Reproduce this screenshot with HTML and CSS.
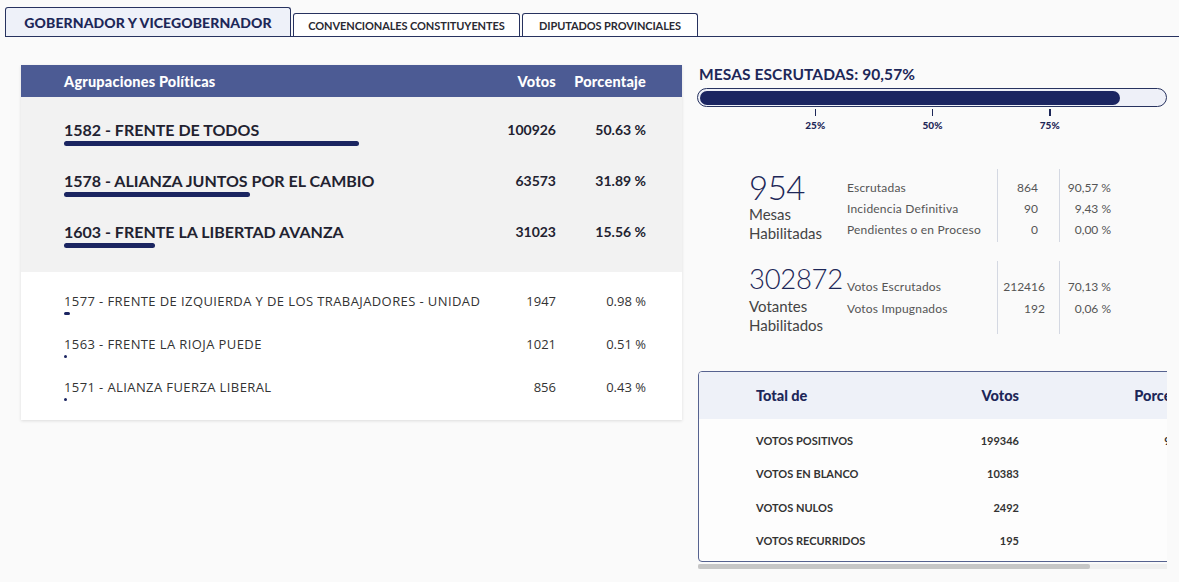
FILE: index.html
```html
<!DOCTYPE html>
<html lang="es">
<head>
<meta charset="utf-8">
<title>Resultados</title>
<link rel="stylesheet" href="styles.css">
</head>
<body>
<nav class="tabs">
  <div class="tab tab-active tab-w1">GOBERNADOR Y VICEGOBERNADOR</div>
  <div class="tab tab-w2">CONVENCIONALES CONSTITUYENTES</div>
  <div class="tab tab-w3">DIPUTADOS PROVINCIALES</div>
</nav>
<main class="layout">
  <section class="results">
    <div class="results-head grid-row">
      <span>Agrupaciones Políticas</span><span class="num">Votos</span><span class="num">Porcentaje</span>
    </div>
    <div class="top-group">
      <div class="party-main">
        <div class="grid-row"><span class="name">1582 - FRENTE DE TODOS</span><span class="num">100926</span><span class="num">50.63 %</span></div>
        <div class="bar" style="width:50.63%"></div>
      </div>
      <div class="party-main">
        <div class="grid-row"><span class="name">1578 - ALIANZA JUNTOS POR EL CAMBIO</span><span class="num">63573</span><span class="num">31.89 %</span></div>
        <div class="bar" style="width:31.89%"></div>
      </div>
      <div class="party-main">
        <div class="grid-row"><span class="name">1603 - FRENTE LA LIBERTAD AVANZA</span><span class="num">31023</span><span class="num">15.56 %</span></div>
        <div class="bar" style="width:15.56%"></div>
      </div>
    </div>
    <div class="rest-group">
      <div class="party-small">
        <div class="grid-row"><span class="name">1577 - FRENTE DE IZQUIERDA Y DE LOS TRABAJADORES - UNIDAD</span><span class="num">1947</span><span class="num">0.98 %</span></div>
        <div class="bar bar-small" style="width:0.98%"></div>
      </div>
      <div class="party-small">
        <div class="grid-row"><span class="name">1563 - FRENTE LA RIOJA PUEDE</span><span class="num">1021</span><span class="num">0.51 %</span></div>
        <div class="bar bar-small" style="width:0.51%"></div>
      </div>
      <div class="party-small">
        <div class="grid-row"><span class="name">1571 - ALIANZA FUERZA LIBERAL</span><span class="num">856</span><span class="num">0.43 %</span></div>
        <div class="bar bar-small" style="width:0.43%"></div>
      </div>
    </div>
  </section>

  <section class="summary">
    <div class="mesas-title">MESAS ESCRUTADAS: 90,57%</div>
    <div class="progress"><div class="progress-fill" style="width:90.57%"></div></div>
    <div class="scale">
      <div class="tick" style="left:25%"><span class="tick-line"></span><span class="tick-label">25%</span></div>
      <div class="tick" style="left:50%"><span class="tick-line"></span><span class="tick-label">50%</span></div>
      <div class="tick" style="left:75%"><span class="tick-line"></span><span class="tick-label">75%</span></div>
    </div>

    <div class="stat stat-first">
      <div class="stat-main">
        <div class="big">954</div>
        <div class="stat-sub">Mesas</div>
        <div class="stat-sub">Habilitadas</div>
      </div>
      <div class="stat-col col-label"><div>Escrutadas</div><div>Incidencia Definitiva</div><div>Pendientes o en Proceso</div></div>
      <div class="stat-col col-val"><div>864</div><div>90</div><div>0</div></div>
      <div class="stat-col col-pct"><div>90,57 %</div><div>9,43 %</div><div>0,00 %</div></div>
    </div>

    <div class="stat stat-second">
      <div class="stat-main">
        <div class="big big-small">302872</div>
        <div class="stat-sub">Votantes</div>
        <div class="stat-sub">Habilitados</div>
      </div>
      <div class="stat-col col-label"><div>Votos Escrutados</div><div>Votos Impugnados</div></div>
      <div class="stat-col col-val"><div>212416</div><div>192</div></div>
      <div class="stat-col col-pct"><div>70,13 %</div><div>0,06 %</div></div>
    </div>

    <div class="totals-wrap">
      <div class="totals">
        <div class="totals-head totals-row">
          <span>Total de</span><span class="num">Votos</span><span class="num">Porcentaje</span>
        </div>
        <div class="totals-body">
          <div class="totals-row"><span>VOTOS POSITIVOS</span><span class="num">199346</span><span class="num">93.85 %</span></div>
          <div class="totals-row"><span>VOTOS EN BLANCO</span><span class="num">10383</span><span class="num">4.89 %</span></div>
          <div class="totals-row"><span>VOTOS NULOS</span><span class="num">2492</span><span class="num">1.17 %</span></div>
          <div class="totals-row"><span>VOTOS RECURRIDOS</span><span class="num">195</span><span class="num">0.09 %</span></div>
        </div>
      </div>
    </div>
    <div class="scrollbar"><div class="scroll-thumb"></div></div>
  </section>
</main>
</body>
</html>
```
FILE: styles.css
```css
body {
  margin: 0;
  background: #fafafa;
  font-family: Lato, "Noto Sans", sans-serif;
  color: #1d2758;
}

/* Tabs */
.tabs {
  display: flex;
  align-items: flex-end;
  gap: 2px;
  margin: 7px 0 0 5px;
  height: 29px;
  border-bottom: 1.5px solid #27325f;
}
.tab {
  box-sizing: border-box;
  height: 23px;
  display: flex;
  align-items: center;
  justify-content: center;
  border: 1px solid #27325f;
  border-bottom: 0;
  border-radius: 3px 3px 0 0;
  background: #fff;
  font-size: 11px;
  font-weight: 700;
  color: #2a2a33;
  letter-spacing: -0.1px;
}
.tab-active {
  height: 29px;
  background: #eef1f9;
  font-size: 14px;
  font-weight: 900;
  color: #1d2758;
  letter-spacing: 0.1px;
}
.tab-w1 { width: 286px; }
.tab-w2 { width: 227px; }
.tab-w3 { width: 176px; }

/* Layout */
.layout {
  display: flex;
  align-items: flex-start;
  gap: 16px;
  padding: 28px 0 0 21px;
}

/* Results card */
.results {
  width: 661px;
  flex: none;
  background: #fff;
  box-shadow: 0 1px 3px rgba(0, 0, 0, 0.12);
}
.grid-row {
  display: grid;
  grid-template-columns: minmax(0, 1fr) 100px 90px;
  align-items: center;
}
.name { white-space: nowrap; }
.num { text-align: right; white-space: nowrap; }
.results-head {
  height: 32px;
  padding: 0 36px 0 43px;
  background: #4c5b94;
  color: #fff;
  font-size: 14.5px;
  font-weight: 900;
  letter-spacing: 0.2px;
}
.top-group {
  background: #f2f2f2;
  padding: 11px 36px 11px 43px;
}
.party-main {
  padding: 12px 0 13px;
  line-height: 20px;
  color: #222230;
  font-weight: 700;
  font-size: 14px;
}
.party-main .name {
  font-size: 16px;
}
.bar {
  height: 5px;
  margin-top: 1px;
  background: #1b2561;
  border-radius: 3px;
  min-width: 2px;
}
.rest-group {
  padding: 10px 36px 9px 43px;
}
.party-small {
  padding: 10px 0;
  font-family: "Open Sans", "Noto Sans", sans-serif;
  font-size: 13px;
  line-height: 18px;
  color: #333;
}
.party-small .name {
  letter-spacing: 0.4px;
}
.bar-small {
  height: 3px;
  margin-top: 2px;
  border-radius: 1.5px;
}

/* Summary column */
.summary {
  width: 469px;
  flex: none;
}
.mesas-title {
  font-size: 15.5px;
  font-weight: 700;
  line-height: 18px;
  margin: 0 0 5px 1px;
  letter-spacing: 0.1px;
}
.progress {
  box-sizing: border-box;
  height: 19px;
  border: 1.5px solid #27325f;
  border-radius: 10px;
  background: #eef0f8;
  padding: 1.5px 2px;
  margin-left: -1px;
  width: 470px;
}
.progress-fill {
  height: 100%;
  background: #1b2561;
  border-radius: 8px;
}
.scale {
  position: relative;
  height: 22px;
  margin-top: 2px;
}
.tick {
  position: absolute;
  top: 0;
  width: 0;
  display: flex;
  flex-direction: column;
  align-items: center;
}
.tick-line {
  width: 1.5px;
  height: 7px;
  background: #1d2758;
}
.tick-label {
  margin-top: 4px;
  font-size: 10px;
  line-height: 10px;
  font-weight: 900;
}

.stat {
  display: flex;
  margin-left: 51px;
}
.stat-first { margin-top: 38px; }
.stat-second { margin-top: 19px; }
.stat-main {
  width: 98px;
  flex: none;
}
.big {
  font-size: 33px;
  font-weight: 300;
  line-height: 36px;
  color: #1d2758;
  letter-spacing: -0.5px;
}
.big-small {
  font-size: 27.5px;
  letter-spacing: -0.3px;
}
.stat-sub {
  font-size: 15px;
  line-height: 18.5px;
  color: #444;
}
.stat-col {
  font-size: 12px;
  line-height: 21.3px;
  color: #555;
  padding-top: 7.7px;
  box-sizing: border-box;
  white-space: nowrap;
}
.stat-second .stat-col { padding-top: 15.3px; }
.col-label { width: 150px; letter-spacing: 0.2px; }
.col-val {
  width: 62px;
  border-left: 1px solid #d4d8e2;
  text-align: right;
  padding-right: 21px;
}
.stat-second .col-val { padding-right: 14px; }
.col-pct {
  width: 62px;
  border-left: 1px solid #d4d8e2;
  text-align: right;
  padding-right: 10px;
}

/* Totals table */
.totals-wrap {
  margin-top: 37px;
  width: 469px;
  overflow: hidden;
}
.totals {
  width: 563px;
  box-sizing: border-box;
  border: 1px solid #56628f;
  border-radius: 4px;
  background: #fdfdfd;
}
.totals-row {
  display: grid;
  grid-template-columns: minmax(0, 1fr) 100px 185px;
  align-items: center;
  padding: 0 56px 0 57px;
}
.totals-head {
  height: 47px;
  background: #eef1f8;
  font-size: 14.5px;
  font-weight: 900;
  color: #1d2758;
  border-radius: 3px 3px 0 0;
}
.totals-body {
  padding: 5px 0 4px;
}
.totals-body .totals-row {
  height: 33.3px;
  font-size: 11px;
  font-weight: 700;
  color: #333;
}
.scrollbar {
  width: 469px;
  height: 4.5px;
  margin-top: 2px;
  background: #efefef;
}
.scroll-thumb {
  width: 392px;
  height: 100%;
  background: #c6c6c6;
  border-radius: 2px;
}
```
